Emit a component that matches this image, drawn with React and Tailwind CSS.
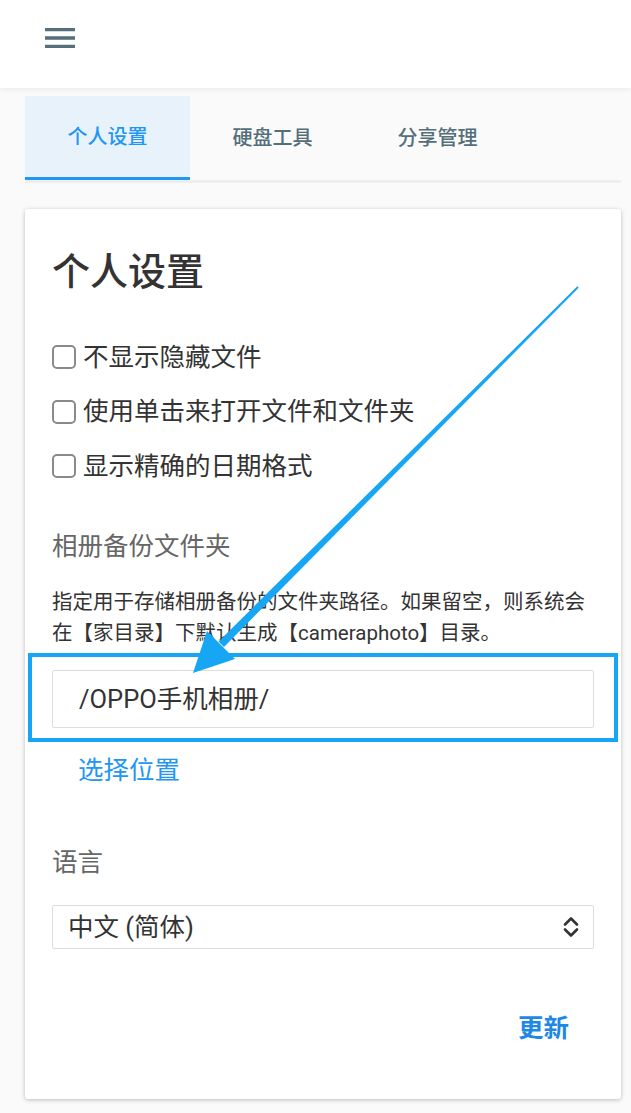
import React from "react";

const font = { fontFamily: 'Roboto, "Noto Sans CJK SC", sans-serif' };

const MenuIcon = () => (
  <svg width="40" height="40" viewBox="0 0 24 24" fill="#546e7a">
    <path d="M3 18h18v-2H3v2zm0-5h18v-2H3v2zm0-7v2h18V6H3z" />
  </svg>
);

const UpDown = () => (
  <svg width="16" height="22" viewBox="0 0 16 22" fill="none" stroke="#333" strokeWidth="2.6" strokeLinecap="round" strokeLinejoin="round">
    <path d="M2 8.5 8 2.5l6 6" />
    <path d="M2 13.5l6 6 6-6" />
  </svg>
);

const Check = ({ label }) => (
  <label className="flex items-center h-[54.5px]">
    <span className="w-[24px] h-[24px] rounded-[5px] border-[2.5px] border-[#8a8a8a] bg-white shrink-0" />
    <span className="ml-[7px] text-[25.5px] leading-none text-[#333]">{label}</span>
  </label>
);

// markup arrow drawn over the screenshot
const Arrow = () => (
  <svg className="absolute left-0 top-0 pointer-events-none" width="631" height="1113">
    <polygon points="577.3,286.3 578.7,287.7 224,647 218.5,641.5" fill="#17a6f3" />
    <polygon points="193,673 207,631 235,659" fill="#17a6f3" />
  </svg>
);

export default function App() {
  return (
    <div className="relative w-[631px] min-h-[1113px] bg-[#fafafa]" style={font}>
      {/* header */}
      <div className="h-[88px] bg-white shadow-[0_1px_6px_rgba(0,0,0,0.08)] flex items-start pl-[40px] pt-[18px]">
        <MenuIcon />
      </div>

      <div className="ml-[25px] w-[596px] pt-[8px]">
        {/* tabs */}
        <div className="flex border-b-[3px] border-[#eeeeee]">
          <div className="w-[165px] h-[84px] -mb-[3px] border-b-[3px] border-[#2196f3] bg-[#e8f2fa] flex items-center justify-center text-[20px] font-medium text-[#2196f3]">
            个人设置
          </div>
          <div className="w-[165px] h-[84px] flex items-center justify-center text-[20px] font-medium text-[#546e7a]">
            硬盘工具
          </div>
          <div className="w-[165px] h-[84px] flex items-center justify-center text-[20px] font-medium text-[#546e7a]">
            分享管理
          </div>
        </div>

        {/* card */}
        <div className="mt-[26px] bg-white rounded-[3px] shadow-[0_1px_4px_rgba(0,0,0,0.25)] px-[27px] pt-[44px] pb-[57px]">
          <h2 className="text-[38px] leading-none text-[#333] font-medium">个人设置</h2>

          <div className="mt-[39px]">
            <Check label="不显示隐藏文件" />
            <Check label="使用单击来打开文件和文件夹" />
            <Check label="显示精确的日期格式" />
          </div>

          <div className="mt-[40px] text-[25.5px] leading-none text-[#666]">相册备份文件夹</div>
          <p className="mt-[28px] text-[20.5px] leading-[31px] text-[#333]">
            指定用于存储相册备份的文件夹路径。如果留空，则系统会
            <br />
            在【家目录】下默认生成【cameraphoto】目录。
          </p>
          <div className="mt-[21px] h-[58px] border border-[#dddddd] rounded-[2px] flex items-center pl-[26px] text-[25.5px] text-[#333]">
            /OPPO手机相册/
          </div>
          <div className="mt-[30px] pl-[26px] text-[25.5px] leading-none text-[#2196f3]">选择位置</div>

          <div className="mt-[66px] text-[25.5px] leading-none text-[#666]">语言</div>
          <div className="mt-[30px] h-[44px] border border-[#dddddd] rounded-[2px] flex items-center justify-between pl-[15px] pr-[14px] text-[25.5px] text-[#333]">
            <span>中文 (简体)</span>
            <UpDown />
          </div>

          <div className="mt-[67px] flex justify-end pr-[25px]">
            <button className="text-[25.5px] leading-none font-bold text-[#1e88e5]">更新</button>
          </div>
        </div>
      </div>

      {/* markup highlight box */}
      <div className="absolute left-[28px] top-[653px] w-[590px] h-[89px] border-[4px] border-[#17a6f3] pointer-events-none" />
      <Arrow />
    </div>
  );
}
